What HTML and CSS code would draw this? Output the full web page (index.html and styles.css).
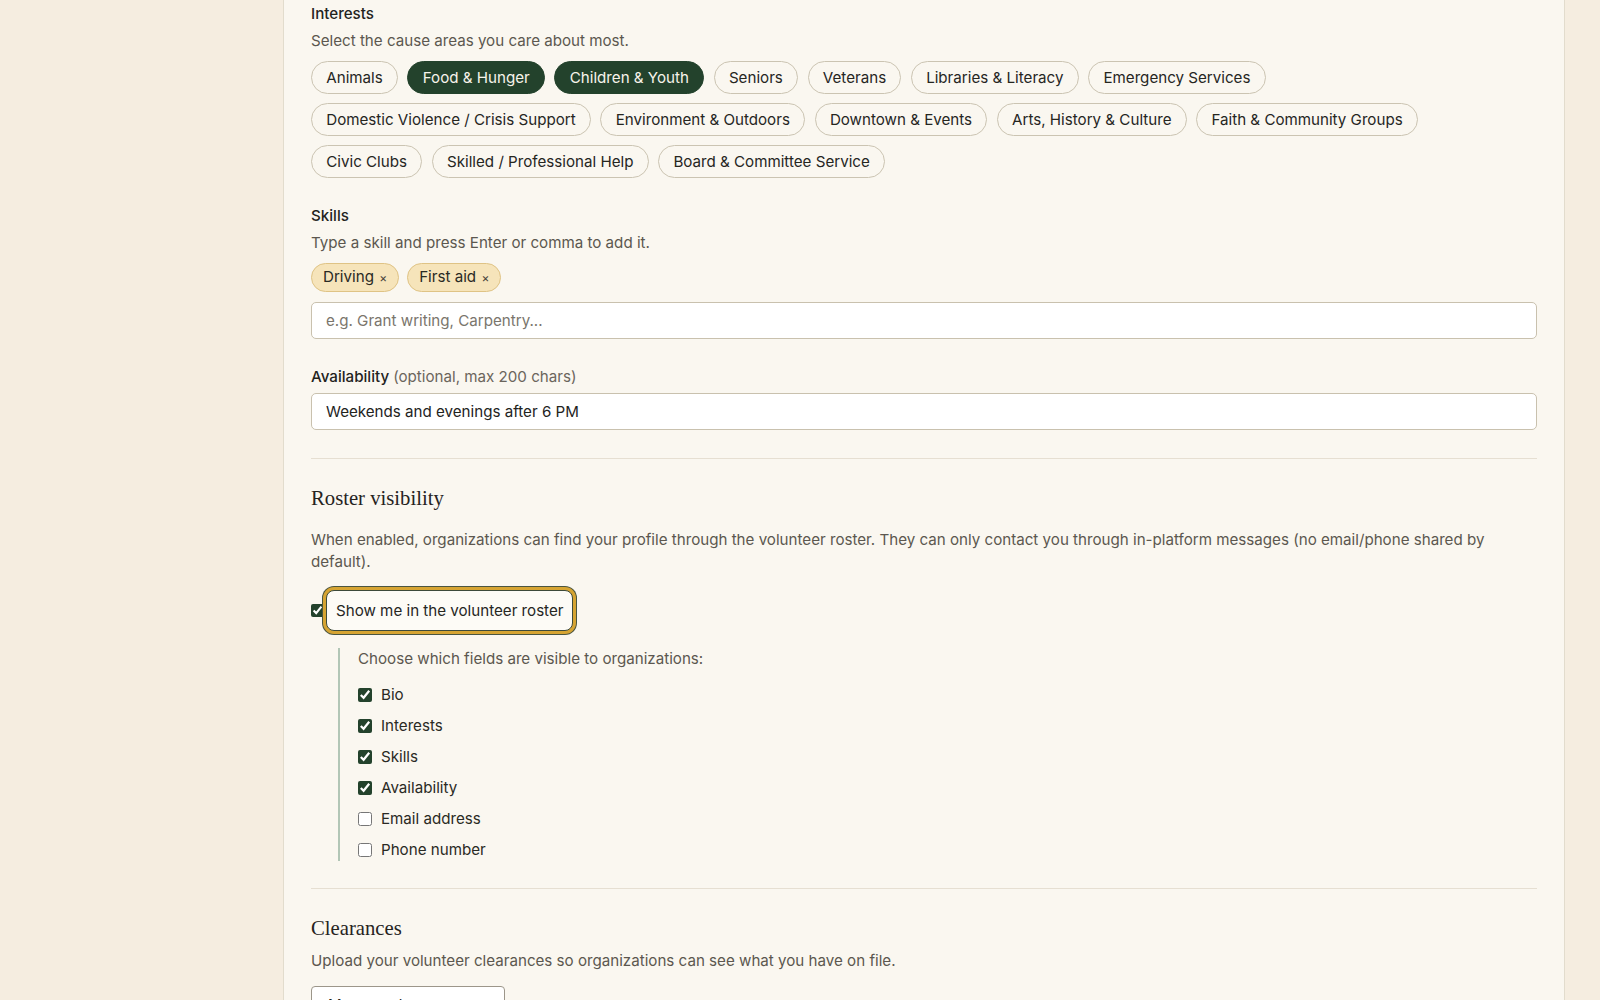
FILE: index.html
```html
<!DOCTYPE html>
<html lang="en">
<head>
<meta charset="UTF-8">
<meta name="viewport" content="width=device-width, initial-scale=1.0">
<title>Volunteer Profile</title>
<link rel="stylesheet" href="styles.css">
</head>
<body>

<div class="card">

    <div class="field">
        <div class="field-label">Interests</div>
        <p class="hint">Select the cause areas you care about most.</p>
        <div class="chips">
            <button class="chip">Animals</button>
            <button class="chip active">Food &amp; Hunger</button>
            <button class="chip active">Children &amp; Youth</button>
            <button class="chip">Seniors</button>
            <button class="chip">Veterans</button>
            <button class="chip">Libraries &amp; Literacy</button>
            <button class="chip">Emergency Services</button>
            <button class="chip">Domestic Violence / Crisis Support</button>
            <button class="chip">Environment &amp; Outdoors</button>
            <button class="chip">Downtown &amp; Events</button>
            <button class="chip">Arts, History &amp; Culture</button>
            <button class="chip">Faith &amp; Community Groups</button>
            <button class="chip">Civic Clubs</button>
            <button class="chip">Skilled / Professional Help</button>
            <button class="chip">Board &amp; Committee Service</button>
        </div>
    </div>

    <div class="field">
        <label class="field-label" for="skill_input">Skills</label>
        <p class="hint">Type a skill and press Enter or comma to add it.</p>
        <div class="tags">
            <span class="tag">Driving <span class="tag-x">&times;</span></span>
            <span class="tag">First aid <span class="tag-x">&times;</span></span>
        </div>
        <input class="text-input" type="text" id="skill_input" placeholder="e.g. Grant writing, Carpentry...">
    </div>

    <div class="field">
        <label class="field-label" for="availability">Availability <span class="optional">(optional, max 200 chars)</span></label>
        <input class="text-input avail" type="text" id="availability" value="Weekends and evenings after 6 PM">
    </div>

    <hr class="divider">

    <h3 class="section-title">Roster visibility</h3>
    <p class="section-text roster-text">When enabled, organizations can find your profile through the volunteer roster. They can only contact you through in-platform messages (no email/phone shared by default).</p>

    <div class="roster-toggle">
        <input type="checkbox" id="show_roster" checked>
        <label class="focus-label" for="show_roster">Show me in the volunteer roster</label>
    </div>

    <div class="visible-fields">
        <p class="hint">Choose which fields are visible to organizations:</p>
        <label class="check-row"><input type="checkbox" checked> Bio</label>
        <label class="check-row"><input type="checkbox" checked> Interests</label>
        <label class="check-row"><input type="checkbox" checked> Skills</label>
        <label class="check-row"><input type="checkbox" checked> Availability</label>
        <label class="check-row"><input type="checkbox"> Email address</label>
        <label class="check-row"><input type="checkbox"> Phone number</label>
    </div>

    <hr class="divider">

    <h3 class="section-title">Clearances</h3>
    <p class="section-text">Upload your volunteer clearances so organizations can see what you have on file.</p>
    <button class="outline-button">Manage clearances</button>

</div>

</body>
</html>
```

FILE: styles.css
```css
body {
    font-family: "Inter", "Liberation Sans", sans-serif;
    background-color: #f5ede0;
    color: #26261f;
    margin: 0;
    padding: 0;
    font-size: 15.15px;
    overflow: hidden;
}

.card {
    margin-left: 283px;
    width: 1226px;
    padding: 4px 27px 40px;
    background-color: #faf7f0;
    border-left: 1px solid #e2dccd;
    border-right: 1px solid #e2dccd;
    min-height: 1000px;
}

.field {
    margin-bottom: 28px;
}

.field-label {
    display: block;
    font-weight: 500;
    line-height: 20px;
    color: #23231d;
    margin-bottom: 6px;
}

.optional {
    font-weight: 400;
    color: #6b655c;
}

.hint {
    margin: 0;
    line-height: 22px;
    color: #5c574f;
}

.chips {
    display: flex;
    flex-wrap: wrap;
    gap: 9px 9.5px;
    margin-top: 9px;
}

.chip {
    font-family: inherit;
    font-size: 15.15px;
    line-height: 21px;
    padding: 5px 14.25px;
    border: 1px solid #cbc4b2;
    border-radius: 999px;
    background-color: #faf7f0;
    color: #26261f;
    cursor: pointer;
}

.chip.active {
    background-color: #23422c;
    border-color: #23422c;
    color: #f7f3ea;
}

.tags {
    display: flex;
    gap: 8px;
    margin-top: 9px;
    margin-bottom: 10px;
}

.tag {
    line-height: 20px;
    padding: 3px 11px 3px 11px;
    border: 1px solid #dfc385;
    border-radius: 999px;
    background-color: #f6e4ba;
    color: #2a2a24;
}

.tag-x {
    font-size: 12px;
    color: #4a453c;
    margin-left: 1px;
}

.text-input {
    display: block;
    box-sizing: border-box;
    width: 100%;
    height: 37px;
    padding: 0 14px;
    font-family: inherit;
    font-size: 15.15px;
    border: 1px solid #c9c1ae;
    border-radius: 5px;
    background-color: #ffffff;
    color: #23231d;
}

.text-input::placeholder {
    color: #7a756c;
}

.divider {
    border: none;
    border-top: 1px solid #e6dfd2;
    margin: 0;
}

.section-title {
    font-family: "Liberation Serif", serif;
    font-weight: 400;
    font-size: 20.7px;
    line-height: 28px;
    color: #26231e;
    margin: 25px 0 8px;
}

.section-text {
    margin: 0;
    line-height: 22px;
    color: #5c574f;
}

.roster-text {
    margin-top: 17px;
}

.roster-toggle {
    display: flex;
    align-items: center;
    margin-top: 17px;
}

.roster-toggle input {
    width: 13px;
    height: 13px;
    margin: 0 2px 0 0;
    accent-color: #23422c;
}

.focus-label {
    position: relative;
    line-height: 21px;
    padding: 9px 9px;
    border: 1px solid #3d4a3b;
    border-radius: 8px;
    background-color: #fdfbf6;
    box-shadow: 0 0 0 3px #d6a432, 0 0 0 4px #4a5540;
}

.visible-fields {
    margin: 17px 0 27px 27px;
    padding-left: 18px;
    border-left: 2px solid #b2c6b6;
    display: flex;
    flex-direction: column;
    gap: 9px;
}

.visible-fields .hint {
    margin-bottom: 5px;
}

.check-row {
    display: flex;
    align-items: center;
    gap: 9px;
    line-height: 22px;
    color: #2a2a24;
}

.check-row input {
    width: 14px;
    height: 14px;
    margin: 0;
    accent-color: #23422c;
}

.outline-button {
    margin-top: 14px;
    font-family: inherit;
    font-size: 15.15px;
    padding: 8px 16px;
    width: 194px;
    text-align: left;
    border: 1px solid #9c968a;
    border-radius: 4px;
    background-color: #ffffff;
    color: #26261f;
}
```
